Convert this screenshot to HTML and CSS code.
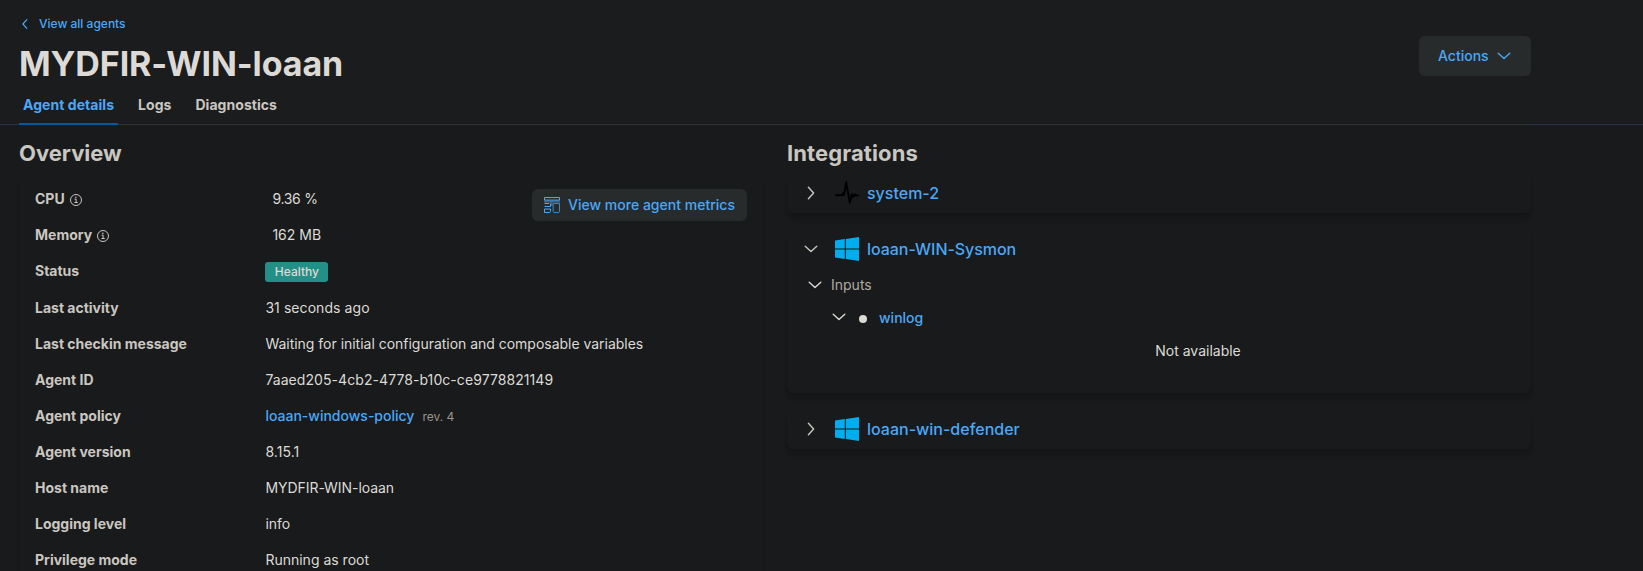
FILE: index.html
```html
<!DOCTYPE html>
<html lang="en">
<head>
<meta charset="utf-8">
<title>Agent details</title>
<link rel="stylesheet" href="styles.css">
</head>
<body>
<svg class="defs" aria-hidden="true">
  <symbol id="down" viewBox="0 0 16 16"><path d="M2.2 5.2 8 10.4l5.8-5.2" fill="none" stroke="currentColor" stroke-width="1.4" stroke-linecap="round" stroke-linejoin="round"/></symbol>
  <symbol id="right" viewBox="0 0 16 16"><path d="M5.4 2.2 10.6 8l-5.2 5.8" fill="none" stroke="currentColor" stroke-width="1.4" stroke-linecap="round" stroke-linejoin="round"/></symbol>
  <symbol id="left" viewBox="0 0 16 16"><path d="M10.4 2.2 5.2 8l5.2 5.8" fill="none" stroke="currentColor" stroke-width="1.5" stroke-linecap="round" stroke-linejoin="round"/></symbol>
  <symbol id="info" viewBox="0 0 12 12"><circle cx="6" cy="6" r="5.5" fill="none" stroke="currentColor"/><path d="M4.5 5h1.6v3.5M4.4 8.5h3.4" fill="none" stroke="currentColor"/><circle cx="5.9" cy="3.2" r=".75" fill="currentColor"/></symbol>
  <symbol id="windows" viewBox="0 0 24 24"><path fill="#00adef" d="M0 3.4 9.8 2.1v9.3H0zM10.9 1.9 24 0v11.4H10.9zM0 12.6h9.8v9.3L0 20.5zM10.9 12.6H24V24l-13.1-1.9z"/></symbol>
</svg>

<header class="header">
  <div class="wrap header-row">
    <div class="heading">
      <a class="back" href="#"><svg class="i12"><use href="#left"/></svg>View all agents</a>
      <h1 class="title">MYDFIR-WIN-loaan</h1>
    </div>
    <button class="btn btn-actions">Actions<svg class="i16"><use href="#down"/></svg></button>
  </div>
  <nav class="wrap tabs">
    <a class="tab tab-active" href="#">Agent details</a>
    <a class="tab" href="#">Logs</a>
    <a class="tab" href="#">Diagnostics</a>
  </nav>
</header>

<main class="wrap columns">
  <section class="column">
    <h2 class="subtitle">Overview</h2>
    <div class="panel overview">
      <div class="metrics">
        <dl class="list">
          <div class="row"><dt>CPU <svg class="info"><use href="#info"/></svg></dt><dd class="inset percent">9.36 %</dd></div>
          <div class="row"><dt>Memory <svg class="info"><use href="#info"/></svg></dt><dd class="inset">162 MB</dd></div>
        </dl>
        <button class="btn btn-metrics"><svg class="i16" viewBox="0 0 16 16"><g fill="none" stroke="currentColor"><path d="M.5.5h15v2.6H.5zM.5 6.5h4.6M.5 9.5h6v-3M.5 12h6M.5 12v3.5h5.2l.8-1V12"/><path d="M9.5 6.5h6v8.2l-.8.8H10l-.8-.8V6.5" opacity=".75"/><path d="M0 4.6h16M7.6 5v4" opacity=".5" stroke-width="2"/></g></svg>View more agent metrics</button>
      </div>
      <dl class="list">
        <div class="row row-status"><dt>Status</dt><dd><span class="badge">Healthy</span></dd></div>
        <div class="row"><dt>Last activity</dt><dd class="wide">31 seconds ago</dd></div>
        <div class="row"><dt>Last checkin message</dt><dd class="tight">Waiting for initial configuration and composable variables</dd></div>
        <div class="row"><dt>Agent ID</dt><dd class="wide">7aaed205-4cb2-4778-b10c-ce9778821149</dd></div>
        <div class="row"><dt>Agent policy</dt><dd><a class="link" href="#">loaan-windows-policy</a><span class="rev">rev. 4</span></dd></div>
        <div class="row"><dt>Agent version</dt><dd class="wide">8.15.1</dd></div>
        <div class="row"><dt>Host name</dt><dd class="host">MYDFIR-WIN-loaan</dd></div>
        <div class="row"><dt>Logging level</dt><dd>info</dd></div>
        <div class="row row-last"><dt>Privilege mode</dt><dd>Running as root</dd></div>
      </dl>
    </div>
  </section>

  <section class="column">
    <h2 class="subtitle subtitle-wide">Integrations</h2>
    <div class="integrations">
      <div class="panel integration">
        <div class="integration-head"><svg class="i16 arrow"><use href="#right"/></svg><svg class="logo" viewBox="0 0 24 24"><path d="M1 14.2h5.8l1.2-2 1 1.7L11.2 1.3l3.6 20.4 2.1-8.6 1.2 3 1.7-2.6 1 .9H23" fill="none" stroke="#000" stroke-width="1.9" stroke-linecap="round" stroke-linejoin="round"/></svg><a class="link" href="#">system-2</a></div>
      </div>
      <div class="panel integration integration-open">
        <div class="integration-head"><svg class="i16 arrow"><use href="#down"/></svg><svg class="logo"><use href="#windows"/></svg><a class="link host" href="#">loaan-WIN-Sysmon</a></div>
        <div class="inputs"><svg class="i16"><use href="#down"/></svg>Inputs</div>
        <div class="input"><svg class="i16"><use href="#down"/></svg><span class="dot"></span><a class="link" href="#">winlog</a></div>
        <p class="empty">Not available</p>
      </div>
      <div class="panel integration">
        <div class="integration-head"><svg class="i16 arrow"><use href="#right"/></svg><svg class="logo"><use href="#windows"/></svg><a class="link" href="#">loaan-win-defender</a></div>
      </div>
    </div>
  </section>
</main>
</body>
</html>
```
FILE: styles.css
```css
* { box-sizing: border-box; }
html, body { height: 100%; }
body {
  margin: 0;
  overflow: hidden;
  background: #181a1b;
  color: #dddad6;
  font: 14px/20px Inter, sans-serif;
}
h1, h2, p, dl, dd { margin: 0; }
a { text-decoration: none; color: #4ba8f7; }
svg { display: block; flex: none; }
.defs { position: absolute; width: 0; height: 0; }
.i12 { width: 12px; height: 12px; }
.i16 { width: 16px; height: 16px; }
.wrap { width: 1512px; margin-left: 19px; }
.link { font-weight: 500; }

.header { height: 125px; background: #1b1c1d; border-bottom: 1px solid #24334a; }
.header-row { display: flex; align-items: flex-start; justify-content: space-between; height: 88px; }
.heading { padding-top: 14px; }
.back { display: flex; align-items: center; gap: 8px; font-size: 12px; font-weight: 500; line-height: 20px; }
.title { margin-top: 10px; font-size: 34px; line-height: 40px; font-weight: 700; letter-spacing: -.1px; }
.btn {
  display: flex; align-items: center; gap: 8px; border: 0; border-radius: 6px;
  background: #272b2c; color: #4ba8f7; font: 500 14px/20px Inter, sans-serif; white-space: nowrap;
}
.btn-actions { width: 112px; height: 40px; margin-top: 36px; padding: 0 19px; gap: 7px; }
.tabs { display: flex; gap: 16px; height: 37px; border-bottom: 1px solid #2f3132; }
.tab { height: 37px; padding: 7px 4px 0; color: #cac6c0; font-weight: 700; letter-spacing: .05px; }
.tab-active { color: #4ba8f7; border-bottom: 2px solid #005a9e; }

.columns { display: flex; gap: 24px; padding-top: 14px; }
.column { width: 744px; }
.subtitle { font-size: 22px; line-height: 28px; font-weight: 700; color: #cac6c0; }
.subtitle-wide { letter-spacing: .1px; }
.panel {
  border-radius: 6px;
  background: #181a1b;
  box-shadow: 0 2px 2px -1px rgba(0,0,0,.08), 0 5px 6px -2px rgba(0,0,0,.07), 0 8px 10px -3px rgba(0,0,0,.04), 0 6px 2px rgba(0,0,0,.02);
}
.overview { margin-top: 8px; height: 396px; padding: 14px 16px 0; border-radius: 6px 6px 0 0; }
.metrics { display: flex; justify-content: space-between; align-items: flex-start; }
.list { display: flex; flex-direction: column; }
.row { display: flex; height: 36px; }
.row-status { height: 37px; }
.row-last { height: 20px; }
.row dt { display: flex; width: 230.4px; color: #cac6c0; font-weight: 700; white-space: nowrap; }
.row dd { white-space: nowrap; }
.row .inset { padding-left: 7px; }
.row .percent { letter-spacing: -.3px; }
.row .wide { letter-spacing: .07px; }
.row .tight { letter-spacing: -.02px; }
.host { letter-spacing: -.05px; }
.info { width: 12px; height: 12px; margin: 5px 0 0 5px; }
.btn-metrics { width: 215px; height: 32px; margin: 0; padding: 0 12px; letter-spacing: .01px; }
.badge { display: block; width: 63px; margin-top: 1px; height: 20px; border-radius: 3px; background: #248f86; font-size: 12px; font-weight: 500; text-align: center; }
.rev { margin-left: 8px; font-size: 12px; color: #9c9589; }

.integrations { display: flex; flex-direction: column; gap: 16px; margin-top: 6px; }
.integration { height: 40px; padding: 0 16px; }
.integration-open { height: 164px; }
.integration-head { display: flex; align-items: center; height: 40px; font-size: 16px; }
.arrow { color: #cac6c0; }
.logo { width: 24px; height: 24px; margin: 0 8px 0 16px; }
.inputs { display: flex; align-items: center; gap: 8px; margin: 6px 0 0 4px; color: #b1aaa0; }
.inputs svg, .input svg { color: #dddad6; }
.input { display: flex; align-items: center; gap: 12px; margin: 13px 0 0 28px; }
.input svg { margin-bottom: 2px; }
.dot { width: 8px; height: 8px; margin-top: 2px; border-radius: 50%; background: #dddad6; }
.empty { margin-top: 13px; padding-left: 78px; text-align: center; }
```
